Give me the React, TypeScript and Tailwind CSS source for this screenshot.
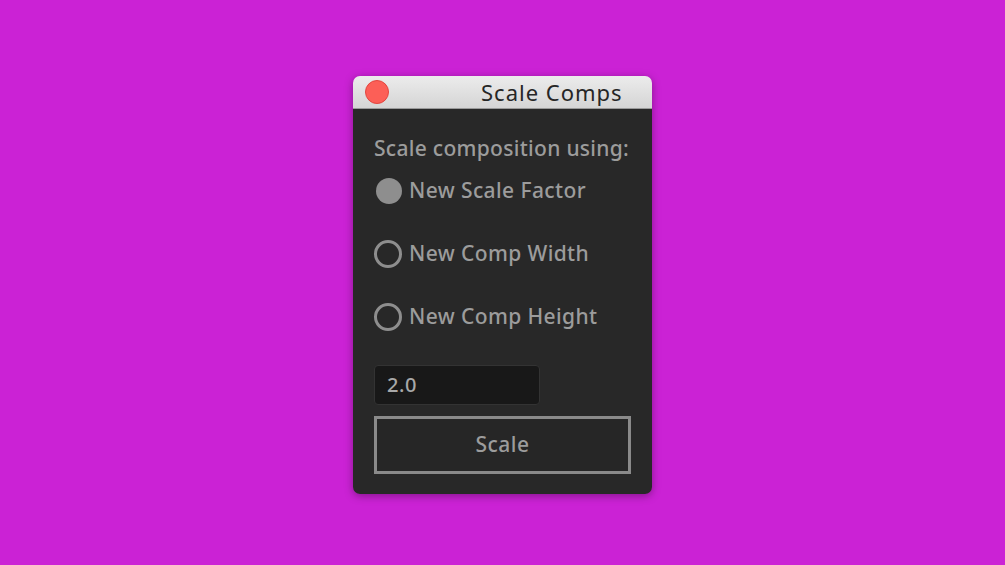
import React from "react";

const font = { fontFamily: '"Noto Sans", "Open Sans", sans-serif' };

function Radio({ checked, label }: { checked?: boolean; label: string }) {
  return (
    <div className="flex items-center h-[26px]">
      {checked ? (
        <div className="w-[26px] h-[26px] rounded-full bg-[#8e8e8e] ml-[2px]" />
      ) : (
        <div className="w-[28px] h-[28px] rounded-full border-[3px] border-[#8e8e8e]" />
      )}
      <span className="ml-[7px] text-[21px] font-medium text-[#9c9c9c] tracking-[0.4px]">{label}</span>
    </div>
  );
}

export default function App() {
  return (
    <div className="w-[1005px] h-[565px] bg-[#cb22d5] pt-[76px] pl-[353px]" style={font}>
      <div className="w-[299px] h-[418px] rounded-[7px] overflow-hidden flex flex-col shadow-[0_2px_8px_rgba(0,0,0,0.35)]">
        <div className="h-[33px] shrink-0 bg-gradient-to-b from-[#ececec] to-[#d5d5d5] border-b border-[#9a9a9a] flex items-center relative">
          <div className="w-[24px] h-[24px] rounded-full bg-[#fc5f57] border border-[#e2463f] ml-[12px]" />
          <div className="absolute left-[128px] top-[1px] text-[22px] leading-[30px] text-[#262626] tracking-[1px]">Scale Comps</div>
        </div>
        <div className="flex-1 bg-[#282828] pl-[21px] pr-[21px] flex flex-col">
          <div className="mt-[25px] text-[21px] font-medium leading-[28px] text-[#9c9c9c] tracking-[0.3px] whitespace-nowrap">Scale composition using:</div>
          <div className="mt-[16px] flex flex-col gap-[37px]">
            <Radio checked label="New Scale Factor" />
            <Radio label="New Comp Width" />
            <Radio label="New Comp Height" />
          </div>
          <div className="mt-[35px] w-[166px] h-[40px] rounded-[4px] bg-[#181818] border border-[#333333] flex items-center pl-[12px] text-[20px] font-medium text-[#a8a8a8] tracking-[0.5px]">2.0</div>
          <div className="mt-[11px] w-[257px] h-[58px] border-[3px] border-[#8a8a8a] bg-[#262626] flex items-center justify-center text-[21px] font-medium text-[#9c9c9c] tracking-[0.5px]">Scale</div>
        </div>
      </div>
    </div>
  );
}
